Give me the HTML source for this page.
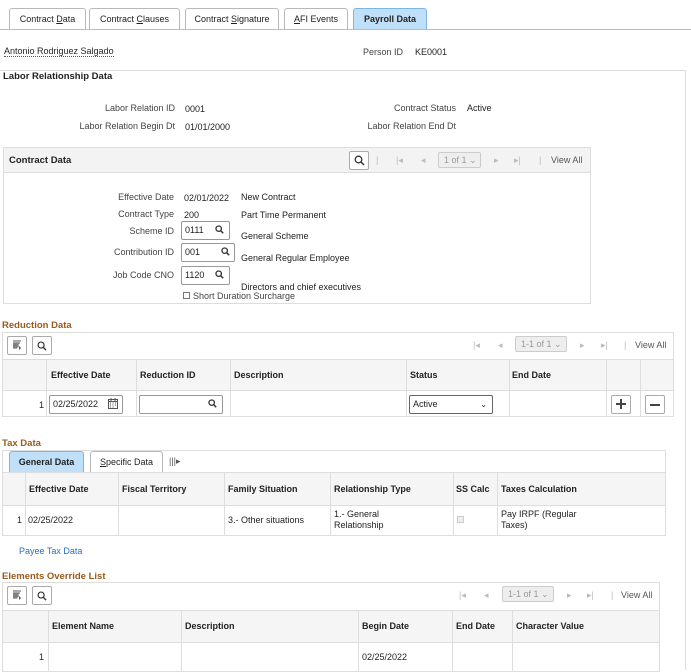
<!DOCTYPE html>
<html><head><meta charset="utf-8"><style>
*{box-sizing:border-box;margin:0;padding:0}
body{width:691px;height:662px;overflow:hidden;background:#fff;font-family:"Liberation Sans",Arial,sans-serif;font-size:9px;color:#222;position:relative}
.a{position:absolute;white-space:nowrap}
.b{font-weight:bold}
.r{text-align:right}
.tab{position:absolute;top:8px;height:22px;border:1px solid #b8b8b8;border-bottom:none;border-radius:3px 3px 0 0;background:#fff;text-align:center;line-height:20px;font-size:9px}
.box{position:absolute;border:1px solid #ddd}
.hdr{color:#9a5a1c;font-weight:bold;font-size:9.5px}
.btn{position:absolute;border:1px solid #aaa;border-radius:2px;background:#fff;width:20px;height:19px}
.inp{position:absolute;border:1px solid #999;border-radius:2px;background:#fff;height:19px;line-height:17px;padding-left:3px}
.col{position:absolute;border-left:1px solid #ddd}
.hl{position:absolute;border-top:1px solid #ddd}
.nav{position:absolute;color:#bbb;font-size:9px}
.pg{position:absolute;border:1px solid #ccc;background:#eee;color:#999;height:16px;line-height:14px;padding-left:5px;border-radius:2px}
svg{position:absolute}
</style></head><body>
<div class="tab" style="left:9px;width:77px">Contract <u>D</u>ata</div>
<div class="tab" style="left:89px;width:91px">Contract <u>C</u>lauses</div>
<div class="tab" style="left:185px;width:94px">Contract <u>S</u>ignature</div>
<div class="tab" style="left:284px;width:64px"><u>A</u>FI Events</div>
<div class="tab b" style="left:353px;width:74px;background:#bfe0f8;border-color:#7fb6df">Payroll Data</div>
<div class="hl" style="left:0;top:29px;width:691px;border-color:#bbb"></div>

<div class="a" style="left:4px;top:46px;border-bottom:1px dotted #555">Antonio Rodriguez Salgado</div>
<div class="a" style="left:363px;top:47px;color:#444">Person ID</div>
<div class="a" style="left:415px;top:47px">KE0001</div>
<div class="hl" style="left:0;top:70px;width:686px"></div>
<div style="position:absolute;left:685px;top:70px;height:600px;border-left:1px solid #ddd"></div>
<div class="a b" style="left:3px;top:71px;font-size:9.5px">Labor Relationship Data</div>

<div class="a r" style="left:40px;width:135px;top:103px;color:#444">Labor Relation ID</div>
<div class="a" style="left:185px;top:104px">0001</div>
<div class="a r" style="left:300px;width:156px;top:103px;color:#444">Contract Status</div>
<div class="a" style="left:467px;top:103px">Active</div>
<div class="a r" style="left:40px;width:135px;top:121px;color:#444">Labor Relation Begin Dt</div>
<div class="a" style="left:185px;top:122px">01/01/2000</div>
<div class="a r" style="left:300px;width:156px;top:121px;color:#444">Labor Relation End Dt</div>

<div class="box" style="left:3px;top:147px;width:588px;height:157px"></div>
<div style="position:absolute;left:4px;top:148px;width:586px;height:25px;background:#f3f3f3;border-bottom:1px solid #ddd"></div>
<div class="a b" style="left:9px;top:155px;font-size:9.5px">Contract Data</div>
<div class="btn" style="left:349px;top:151px"></div>
<svg style="left:354px;top:155px" width="11" height="11" viewBox="0 0 11 11"><circle cx="4.5" cy="4.5" r="3.3" fill="none" stroke="#333" stroke-width="1.3"/><path d="M7 7l3 3" stroke="#333" stroke-width="1.5"/></svg>
<div class="nav" style="left:376px;top:155px">|</div><div class="nav" style="left:396px;top:155px">|◂</div><div class="nav" style="left:421px;top:155px">◂</div>
<div class="pg" style="left:438px;top:152px;width:43px">1 of 1 ⌄</div>
<div class="nav" style="left:494px;top:155px">▸</div><div class="nav" style="left:514px;top:155px">▸|</div><div class="nav" style="left:539px;top:155px">|</div>
<div class="a" style="left:551px;top:155px;color:#555">View All</div>

<div class="a r" style="left:60px;width:114px;top:192px;color:#444">Effective Date</div>
<div class="a" style="left:184px;top:193px">02/01/2022</div><div class="a" style="left:241px;top:192px">New Contract</div>
<div class="a r" style="left:60px;width:114px;top:209px;color:#444">Contract Type</div>
<div class="a" style="left:184px;top:210px">200</div><div class="a" style="left:241px;top:210px">Part Time Permanent</div>
<div class="a r" style="left:60px;width:114px;top:226px;color:#444">Scheme ID</div>
<div class="inp" style="left:181px;top:221px;width:49px;border-color:#6a9fd4">0111</div>
<div class="a r" style="left:60px;width:114px;top:247px;color:#444">Contribution ID</div>
<div class="inp" style="left:181px;top:243px;width:54px">001</div>
<div class="a r" style="left:60px;width:114px;top:270px;color:#444">Job Code CNO</div>
<div class="inp" style="left:181px;top:266px;width:49px">1120</div>
<svg style="left:215px;top:225px" width="9" height="9" viewBox="0 0 11 11"><circle cx="4.5" cy="4.5" r="3.3" fill="none" stroke="#333" stroke-width="1.6"/><path d="M7 7l3 3" stroke="#333" stroke-width="1.8"/></svg>
<svg style="left:221px;top:247px" width="9" height="9" viewBox="0 0 11 11"><circle cx="4.5" cy="4.5" r="3.3" fill="none" stroke="#333" stroke-width="1.6"/><path d="M7 7l3 3" stroke="#333" stroke-width="1.8"/></svg>
<svg style="left:215px;top:270px" width="9" height="9" viewBox="0 0 11 11"><circle cx="4.5" cy="4.5" r="3.3" fill="none" stroke="#333" stroke-width="1.6"/><path d="M7 7l3 3" stroke="#333" stroke-width="1.8"/></svg>
<div class="a" style="left:241px;top:231px">General Scheme</div>
<div class="a" style="left:241px;top:253px">General Regular Employee</div>
<div class="a" style="left:241px;top:282px">Directors and chief executives</div>
<div style="position:absolute;left:183px;top:292px;width:7px;height:7px;border:1px solid #777"></div>
<div class="a" style="left:193px;top:291px;color:#444">Short Duration Surcharge</div>

<div class="a hdr" style="left:2px;top:320px">Reduction Data</div>
<div class="box" style="left:2px;top:332px;width:672px;height:85px"></div>
<div class="btn" style="left:7px;top:336px"></div><div class="btn" style="left:32px;top:336px"></div>
<svg style="left:12px;top:340px" width="10" height="10" viewBox="0 0 10 10"><path d="M1 1h8M1 3h7M1 5h5M1 7h5M2 3v6M4 3v6M6 3v4" stroke="#555" stroke-width="1"/><path d="M7 6l2 2-2 2z" fill="#555"/></svg>
<svg style="left:37px;top:341px" width="10" height="10" viewBox="0 0 11 11"><circle cx="4.5" cy="4.5" r="3.3" fill="none" stroke="#333" stroke-width="1.3"/><path d="M7 7l3 3" stroke="#333" stroke-width="1.5"/></svg>
<div class="nav" style="left:473px;top:340px">|◂</div><div class="nav" style="left:498px;top:340px">◂</div>
<div class="pg" style="left:515px;top:336px;width:52px">1-1 of 1 ⌄</div>
<div class="nav" style="left:580px;top:340px">▸</div><div class="nav" style="left:601px;top:340px">▸|</div><div class="nav" style="left:624px;top:340px">|</div>
<div class="a" style="left:635px;top:340px;color:#555">View All</div>
<div style="position:absolute;left:3px;top:360px;width:670px;height:30px;background:#f5f5f5"></div>
<div class="hl" style="left:2px;top:359px;width:672px"></div><div class="hl" style="left:2px;top:390px;width:672px"></div>
<div class="col" style="left:46px;top:360px;height:57px"></div><div class="col" style="left:136px;top:360px;height:57px"></div><div class="col" style="left:230px;top:360px;height:57px"></div><div class="col" style="left:406px;top:360px;height:57px"></div><div class="col" style="left:509px;top:360px;height:57px"></div><div class="col" style="left:606px;top:360px;height:57px"></div><div class="col" style="left:640px;top:360px;height:57px"></div>
<div class="a b" style="left:51px;top:370px">Effective Date</div><div class="a b" style="left:140px;top:370px">Reduction ID</div><div class="a b" style="left:234px;top:370px">Description</div><div class="a b" style="left:410px;top:370px">Status</div><div class="a b" style="left:512px;top:370px">End Date</div>
<div class="a" style="left:39px;top:400px">1</div>
<div class="inp" style="left:49px;top:395px;width:74px">02/25/2022</div>
<svg style="left:108px;top:398px" width="10" height="11" viewBox="0 0 10 11"><rect x="0.5" y="1.5" width="9" height="9" fill="none" stroke="#555"/><path d="M0.5 3.5h9M3 0v3M7 0v3" stroke="#555"/><path d="M2 5h1M4.5 5h1M7 5h1M2 7h1M4.5 7h1M7 7h1M2 9h1M4.5 9h1" stroke="#555"/></svg>
<div class="inp" style="left:139px;top:395px;width:84px"></div>
<svg style="left:208px;top:399px" width="9" height="9" viewBox="0 0 11 11"><circle cx="4.5" cy="4.5" r="3.3" fill="none" stroke="#333" stroke-width="1.6"/><path d="M7 7l3 3" stroke="#333" stroke-width="1.8"/></svg>
<div class="inp" style="left:409px;top:395px;width:84px;border-color:#666">Active<span style="position:absolute;right:5px;font-size:8px">⌄</span></div>
<div class="btn" style="left:611px;top:395px"></div><div class="btn" style="left:645px;top:395px"></div>
<div style="position:absolute;left:616px;top:403px;width:10px;height:2px;background:#444"></div>
<div style="position:absolute;left:620px;top:399px;width:2px;height:10px;background:#444"></div>
<div style="position:absolute;left:650px;top:404px;width:10px;height:2px;background:#444"></div>

<div class="a hdr" style="left:2px;top:438px">Tax Data</div>
<div class="box" style="left:2px;top:450px;width:664px;height:86px"></div>
<div class="tab b" style="left:9px;top:451px;width:75px;height:22px;background:#bfe0f8;border-color:#7fb6df">General Data</div>
<div class="tab" style="left:90px;top:451px;width:73px;height:22px"><u>S</u>pecific Data</div>
<div class="a" style="left:169px;top:456px;color:#555">|||▸</div>
<div style="position:absolute;left:3px;top:473px;width:662px;height:32px;background:#f5f5f5"></div>
<div class="hl" style="left:2px;top:472px;width:664px"></div><div class="hl" style="left:2px;top:505px;width:664px"></div>
<div class="col" style="left:25px;top:473px;height:63px"></div><div class="col" style="left:118px;top:473px;height:63px"></div><div class="col" style="left:224px;top:473px;height:63px"></div><div class="col" style="left:330px;top:473px;height:63px"></div><div class="col" style="left:453px;top:473px;height:63px"></div><div class="col" style="left:497px;top:473px;height:63px"></div>
<div class="a b" style="left:29px;top:484px">Effective Date</div><div class="a b" style="left:122px;top:484px">Fiscal Territory</div><div class="a b" style="left:228px;top:484px">Family Situation</div><div class="a b" style="left:334px;top:484px">Relationship Type</div><div class="a b" style="left:456px;top:484px">SS Calc</div><div class="a b" style="left:501px;top:484px">Taxes Calculation</div>
<div class="a" style="left:17px;top:515px">1</div><div class="a" style="left:28px;top:515px">02/25/2022</div><div class="a" style="left:228px;top:515px">3.- Other situations</div>
<div class="a" style="left:334px;top:509px;line-height:11px">1.- General<br>Relationship</div>
<div style="position:absolute;left:457px;top:516px;width:7px;height:7px;border:1px solid #ccc;background:#eee"></div>
<div class="a" style="left:501px;top:509px;line-height:11px">Pay IRPF (Regular<br>Taxes)</div>

<div class="a" style="left:19px;top:546px;color:#2a6ebb">Payee Tax Data</div>

<div class="a hdr" style="left:2px;top:571px">Elements Override List</div>
<div class="box" style="left:2px;top:582px;width:658px;height:90px"></div>
<div class="btn" style="left:7px;top:586px"></div><div class="btn" style="left:32px;top:586px"></div>
<svg style="left:12px;top:590px" width="10" height="10" viewBox="0 0 10 10"><path d="M1 1h8M1 3h7M1 5h5M1 7h5M2 3v6M4 3v6M6 3v4" stroke="#555" stroke-width="1"/><path d="M7 6l2 2-2 2z" fill="#555"/></svg>
<svg style="left:37px;top:591px" width="10" height="10" viewBox="0 0 11 11"><circle cx="4.5" cy="4.5" r="3.3" fill="none" stroke="#333" stroke-width="1.3"/><path d="M7 7l3 3" stroke="#333" stroke-width="1.5"/></svg>
<div class="nav" style="left:459px;top:590px">|◂</div><div class="nav" style="left:484px;top:590px">◂</div>
<div class="pg" style="left:502px;top:586px;width:52px">1-1 of 1 ⌄</div>
<div class="nav" style="left:567px;top:590px">▸</div><div class="nav" style="left:587px;top:590px">▸|</div><div class="nav" style="left:611px;top:590px">|</div>
<div class="a" style="left:621px;top:590px;color:#555">View All</div>
<div style="position:absolute;left:3px;top:611px;width:656px;height:31px;background:#f5f5f5"></div>
<div class="hl" style="left:2px;top:610px;width:658px"></div><div class="hl" style="left:2px;top:642px;width:658px"></div>
<div class="col" style="left:48px;top:611px;height:60px"></div><div class="col" style="left:181px;top:611px;height:60px"></div><div class="col" style="left:358px;top:611px;height:60px"></div><div class="col" style="left:452px;top:611px;height:60px"></div><div class="col" style="left:512px;top:611px;height:60px"></div>
<div class="a b" style="left:52px;top:621px">Element Name</div><div class="a b" style="left:185px;top:621px">Description</div><div class="a b" style="left:362px;top:621px">Begin Date</div><div class="a b" style="left:456px;top:621px">End Date</div><div class="a b" style="left:516px;top:621px">Character Value</div>
<div class="a" style="left:39px;top:652px">1</div><div class="a" style="left:362px;top:652px">02/25/2022</div>
</body></html>
